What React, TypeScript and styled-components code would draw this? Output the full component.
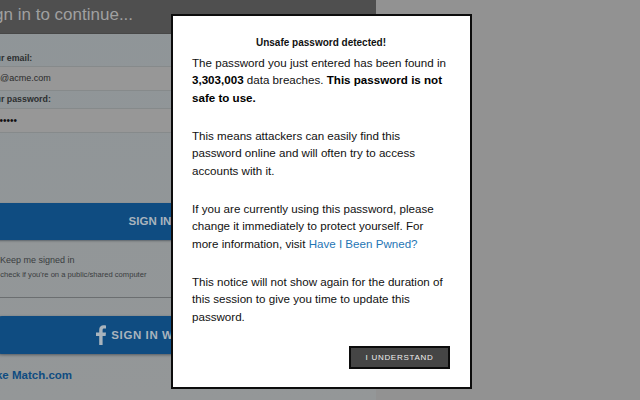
import styled, { createGlobalStyle } from 'styled-components';

const GlobalStyle = createGlobalStyle`
  html, body {
    margin: 0;
    height: 100%;
    background: #929292;
    font-family: "Liberation Sans", Arial, sans-serif;
  }
  * { box-sizing: border-box; }
`

export default function App() {
  return (<Page>
    <GlobalStyle />
    <SignInPanel>
      <Header><HeaderTitle>Sign in to continue...</HeaderTitle></Header>
      <Form>
        <Label>Your email:</Label>
        <Field>you@acme.com</Field>
        <Label $tight>Your password:</Label>
        <Field $password>••••••••</Field>
        <SignInButton>SIGN IN</SignInButton>
        <KeepSigned>
          <KeepTitle>Keep me signed in</KeepTitle>
          <KeepHint>Un-check if you're on a public/shared computer</KeepHint>
        </KeepSigned>
        <Divider><DividerLabel>OR</DividerLabel></Divider>
        <FacebookButton>
          <FacebookMark viewBox="0 0 10 20" aria-hidden="true">
            <path d="M6.600 20V11h3l.4-3.500H6.600V5.300c0-1 .3-1.700 1.700-1.700H10V.4C9.700.3 8.700.2 7.500.2 5 .2 3.200 1.800 3.200 4.800v2.700H0V11h3.200v9z" />
          </FacebookMark>
          SIGN IN WITH FACEBOOK
        </FacebookButton>
        <MatchLink>Make Match.com</MatchLink>
      </Form>
    </SignInPanel>
    <Modal>
      <ModalTitle>Unsafe password detected!</ModalTitle>
      <Paragraph>
        The password you just entered has been found in <strong>3,303,003</strong> data breaches. <strong>This password is not safe to use.</strong>
      </Paragraph>
      <Paragraph>
        This means attackers can easily find this password online and will often try to access accounts with it.
      </Paragraph>
      <Paragraph>
        If you are currently using this password, please change it immediately to protect yourself. For more information, visit <ModalLink>Have I Been Pwned?</ModalLink>
      </Paragraph>
      <Paragraph>
        This notice will not show again for the duration of this session to give you time to update this password.
      </Paragraph>
      <ModalFooter>
        <UnderstandButton>I UNDERSTAND</UnderstandButton>
      </ModalFooter>
    </Modal>
  </Page>)
}

const Page = styled.div`
  position: relative;
  width: 640px;
  height: 400px;
  overflow: hidden;
  background: #929292;
`

const SignInPanel = styled.div`
  width: 376px;
  height: 400px;
  overflow: hidden;
  background: linear-gradient(#8f9598, #949798);
`

const Header = styled.div`
  height: 34px;
  background: #4f4f4f;
  border-bottom: 1px solid #474747;
  overflow: hidden;
`

const HeaderTitle = styled.h1`
  margin: 5px 0 0 -21px;
  font-size: 17px;
  line-height: 20px;
  font-weight: 400;
  white-space: nowrap;
  color: #a0a0a0;
`

const Form = styled.div`
  display: flex;
  flex-direction: column;
  padding-top: 18px;
`

const Label = styled.label<{ $tight?: boolean }>`
  margin: ${p => (p.$tight ? '2px' : '0')} 0 0 -15px;
  height: 13px;
  font-size: 8.800px;
  line-height: 13px;
  font-weight: 700;
  white-space: nowrap;
  color: #2c2f30;
`

const Field = styled.div<{ $password?: boolean }>`
  height: 25px;
  margin-top: ${p => (p.$password ? '2px' : '1px')};
  background: #979797;
  border-top: 1px solid #868a8b;
  border-bottom: 1px solid #868a8b;
  font-size: ${p => (p.$password ? '10px' : '9px')};
  line-height: 23px;
  white-space: nowrap;
  color: ${p => (p.$password ? '#111' : '#2a2a2a')};
  text-indent: ${p => (p.$password ? '-11px' : '-14.500px')};
`

const SignInButton = styled.div`
  margin: 70px 0 0 -12px;
  width: 324px;
  height: 37px;
  background: #0f4c81;
  border-radius: 6px;
  box-shadow: 0 1px 2px rgba(40, 50, 60, 0.5);
  font-size: 11.500px;
  line-height: 37px;
  font-weight: 700;
  text-align: center;
  color: #a9b4bd;
`

const KeepSigned = styled.div`
  display: flex;
  flex-direction: column;
  margin: 13px 0 0 0;
`

const KeepTitle = styled.span`
  font-size: 9px;
  line-height: 14px;
  color: #3a3d3f;
`

const KeepHint = styled.span`
  margin: 1px 0 0 -12px;
  font-size: 7.600px;
  line-height: 13px;
  white-space: nowrap;
  color: #3a3d3f;
`

const Divider = styled.div`
  position: relative;
  display: flex;
  align-items: center;
  justify-content: center;
  height: 12px;
  margin: 10px 0 0 0;
  &::before {
    content: '';
    position: absolute;
    left: 0;
    right: 0;
    top: 6px;
    height: 1px;
    background: #6b6e70;
  }
`

const DividerLabel = styled.span`
  position: relative;
  padding-left: 2px;
  background: #929698;
  font-size: 10px;
  line-height: 12px;
  font-weight: 700;
  color: #2c2f30;
`

const FacebookButton = styled.div`
  display: flex;
  align-items: center;
  justify-content: center;
  gap: 5px;
  margin: 13px 0 0 -8px;
  width: 380px;
  height: 38px;
  background: #0f4c81;
  border-radius: 10px;
  box-shadow: 0 1px 3px rgba(40, 50, 60, 0.6);
  font-size: 11.500px;
  font-weight: 700;
  letter-spacing: 0.6px;
  white-space: nowrap;
  color: #a9b4bd;
`

const FacebookMark = styled.svg`
  width: 10px;
  height: 20px;
  fill: #a9b4bd;
`

const MatchLink = styled.a`
  margin: 14px 0 0 -20px;
  font-size: 11.500px;
  line-height: 14px;
  font-weight: 700;
  white-space: nowrap;
  color: #0f4c81;
`

const Modal = styled.div`
  position: absolute;
  left: 171px;
  top: 14px;
  width: 301px;
  height: 375px;
  padding: 20px 20px 0 19px;
  background: #fff;
  border: 2px solid #0c0c0c;
`

const ModalTitle = styled.h2`
  margin: 0 0 4.500px;
  font-size: 10px;
  line-height: 13px;
  font-weight: 700;
  text-align: center;
  color: #111;
`

const Paragraph = styled.p`
  margin: 0 0 20.500px;
  font-size: 11.600px;
  line-height: 17.500px;
  color: #111;
  strong { color: #000; }
`

const ModalLink = styled.a`
  color: #1f76b5;
`

const ModalFooter = styled.div`
  display: flex;
  justify-content: flex-end;
  margin-top: 1.500px;
`

const UnderstandButton = styled.button`
  width: 101px;
  height: 23px;
  padding: 0;
  background: #454545;
  border: 2px solid #0c0c0c;
  border-radius: 0;
  font-family: inherit;
  font-size: 8px;
  letter-spacing: 0.7px;
  color: #eee;
`
